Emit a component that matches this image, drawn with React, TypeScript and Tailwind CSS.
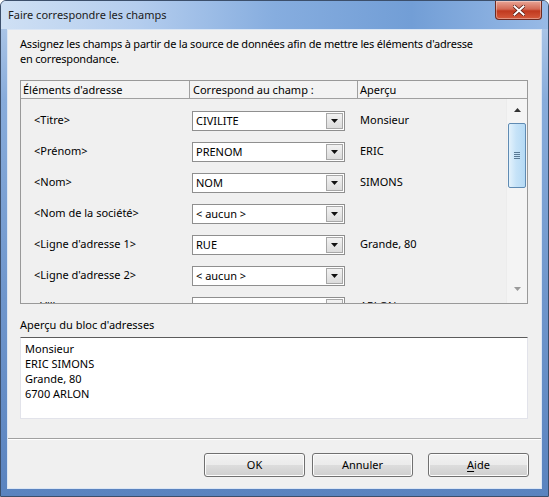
import React from 'react';

type Row = { label: string; field: string; preview: string };

const rows: Row[] = [
  { label: '<Titre>', field: 'CIVILITE', preview: 'Monsieur' },
  { label: '<Prénom>', field: 'PRENOM', preview: 'ERIC' },
  { label: '<Nom>', field: 'NOM', preview: 'SIMONS' },
  { label: '<Nom de la société>', field: '< aucun >', preview: '' },
  { label: "<Ligne d'adresse 1>", field: 'RUE', preview: 'Grande, 80' },
  { label: "<Ligne d'adresse 2>", field: '< aucun >', preview: '' },
  { label: '<Ville>', field: 'LOCALITE', preview: 'ARLON' },
];

const Combo = ({ value }: { value: string }) => (
  <div className="flex h-[20px] w-[153px] items-center border border-[#8f8f8f] bg-white pl-[3px] pr-[1px]">
    <span className="flex-1 whitespace-nowrap leading-[16px]">{value}</span>
    <div className="flex h-[16px] w-[17px] items-center justify-center border border-[#a7a7a7] bg-[linear-gradient(#f2f2f2,#dcdcdc)]">
      <svg width="7" height="4" viewBox="0 0 7 4">
        <path d="M0 0h7L3.5 4z" fill="#111" />
      </svg>
    </div>
  </div>
);

const Button = ({ children }: { children: React.ReactNode }) => (
  <button className="h-[24px] w-[101px] rounded-[3px] border border-[#707070] bg-[linear-gradient(#f2f2f2_0%,#ebebeb_50%,#dddddd_50%,#cfcfcf_100%)] text-[11px] text-black shadow-[inset_0_0_0_1px_#fcfcfc]">
    {children}
  </button>
);

export default function App() {
  return (
    <div className="flex h-[497px] w-[549px] flex-col overflow-hidden rounded-t-[6px] border border-[#3c4f6b] bg-[linear-gradient(to_bottom,#b6cdea,#88acdb_20%,#6f96cc_60%,#5a83bf)] font-['Noto_Sans',sans-serif] text-[11px] text-black">
      {/* title bar */}
      <div className="flex h-[28px] shrink-0 items-start justify-between bg-[linear-gradient(to_right,#cfe0f4,#b4cdee_25%,#86addf_50%,#729ed6_75%,#98bae6)] pl-[7px] pr-[6px]">
        <span className="mt-[6px] leading-[16px] text-[#1b1b1b]">Faire correspondre les champs</span>
        <div className="flex h-[19px] w-[47px] items-center justify-center rounded-b-[4px] border border-t-0 border-[#6e2a20] bg-[linear-gradient(#e9a596,#d46a55_45%,#c0391f_55%,#d55a3c)] shadow-[inset_0_0_0_1px_rgba(255,255,255,0.35)]">
          <svg width="12" height="11" viewBox="0 0 12 11">
            <path d="M1.5 1.5l9 8M10.5 1.5l-9 8" stroke="#5a1d14" strokeWidth="3.6" strokeLinecap="square" />
            <path d="M1.5 1.5l9 8M10.5 1.5l-9 8" stroke="#fff" strokeWidth="2" strokeLinecap="square" />
          </svg>
        </div>
      </div>

      {/* client area */}
      <div className="ml-[6px] mr-[6px] flex flex-1 flex-col border border-[#dbe6f4] bg-[#f0f0f0]">
        <div className="pl-[12px] pr-[13px] pt-[6px]">
          <p className="leading-[15px]">
            <span className="whitespace-nowrap tracking-[-0.2px]">Assignez les champs à partir de la source de données afin de mettre les éléments d'adresse</span>
            <br />
            <span className="tracking-[-0.2px]">en correspondance.</span>
          </p>

          {/* mapping list */}
          <div className="mt-[14px] border border-[#999]">
            <div className="flex h-[18px] border-b border-[#a0a0a0] bg-[#f3f3f3] leading-[17px]">
              <div className="w-[168px] pl-[2px]">Éléments d'adresse</div>
              <div className="w-[168px] border-l border-[#a0a0a0] pl-[3px]">Correspond au champ :</div>
              <div className="flex-1 border-l border-[#a0a0a0] pl-[2px]">Aperçu</div>
            </div>
            <div className="flex h-[204px]">
              <div className="flex-1 overflow-hidden pt-[6px]">
                {rows.map((r) => (
                  <div key={r.label} className="flex h-[31px] items-center">
                    <div className="w-[168px] pl-[13px]">{r.label}</div>
                    <div className="w-[168px] pl-[3px]">
                      <Combo value={r.field} />
                    </div>
                    <div className="flex-1 pl-[3px]">{r.preview}</div>
                  </div>
                ))}
              </div>
              {/* scrollbar */}
              <div className="flex w-[21px] flex-col items-center border-l border-[#ececec] bg-[#f4f4f4]">
                <div className="flex h-[17px] w-full items-center justify-center pt-[5px]">
                  <svg width="7" height="4" viewBox="0 0 7 4">
                    <path d="M0 4h7L3.5 0z" fill="#333" />
                  </svg>
                </div>
                <div className="mt-[7px] flex h-[65px] w-[18px] items-center justify-center rounded-[2px] border border-[#5f8bb3] bg-[linear-gradient(to_right,#e3f2fc,#c6e3f8_45%,#b5daf5)]">
                  <div className="flex flex-col gap-[1px]">
                    <div className="h-[1px] w-[6px] bg-[#5a7a95]" />
                    <div className="h-[1px] w-[6px] bg-[#5a7a95]" />
                    <div className="h-[1px] w-[6px] bg-[#5a7a95]" />
                    <div className="h-[1px] w-[6px] bg-[#5a7a95]" />
                  </div>
                </div>
                <div className="mt-auto flex h-[17px] w-full items-start justify-center pt-[1px] pb-[8px]">
                  <svg width="7" height="4" viewBox="0 0 7 4">
                    <path d="M0 0h7L3.5 4z" fill="#9a9a9a" />
                  </svg>
                </div>
              </div>
            </div>
          </div>

          <div className="mt-[13px] leading-[15px]">Aperçu du bloc d'adresses</div>
          <div className="mt-[5px] h-[82px] border border-[#e2e3ea] border-t-[#5c5c5c] bg-white pl-[4px] pt-[3px] leading-[15px]">
            <div>Monsieur</div>
            <div>ERIC SIMONS</div>
            <div>Grande, 80</div>
            <div>6700 ARLON</div>
          </div>
        </div>

        {/* footer */}
        <div className="mt-[19px] flex flex-1 items-start justify-end border-t border-[#a0a0a0] pr-[12px] pt-[14px] shadow-[inset_0_1px_0_#ffffff]">
          <Button>OK</Button>
          <div className="ml-[7px]">
            <Button>Annuler</Button>
          </div>
          <div className="ml-[15px]">
            <Button>
              <span className="underline underline-offset-2">A</span>ide
            </Button>
          </div>
        </div>
      </div>
      <div className="h-[7px] shrink-0" />
    </div>
  );
}
